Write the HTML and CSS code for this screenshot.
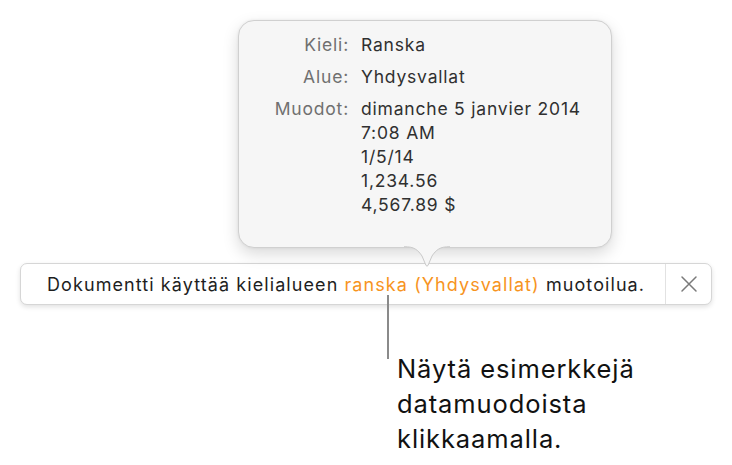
FILE: index.html
```html
<!DOCTYPE html>
<html lang="fi">
<head>
<meta charset="utf-8">
<title>Kielialue</title>
<link rel="stylesheet" href="styles.css">
</head>
<body>
<div class="stage">
  <div class="popover">
    <div class="pop-grid">
      <div class="lbl">Kieli:</div>
      <div class="val">Ranska</div>
      <div class="lbl">Alue:</div>
      <div class="val">Yhdysvallat</div>
      <div class="lbl">Muodot:</div>
      <div class="val formats">
        <span>dimanche 5 janvier 2014</span>
        <span>7:08 AM</span>
        <span>1/5/14</span>
        <span>1,234.56</span>
        <span>4,567.89 $</span>
      </div>
    </div>
    <svg class="arrow" width="46" height="22" viewBox="0 0 46 22">
      <path d="M0 0.5 C10 0.5 14 4 18 10 L22 19.5 Q23 20.8 24 19.5 L28 10 C32 4 36 0.5 46 0.5" fill="#f6f6f6" stroke="#cacaca" stroke-width="1"/>
      <rect x="0" y="-1" width="46" height="1.2" fill="#f6f6f6"/>
    </svg>
  </div>
  <div class="bar">
    <div class="msg">Dokumentti käyttää kielialueen <span class="hl">ranska (Yhdysvallat)</span> muotoilua.</div>
    <div class="close">
      <svg width="18" height="18" viewBox="0 0 18 18"><path d="M2 2 L16 16 M16 2 L2 16" stroke="#7a7a7a" stroke-width="1.5" stroke-linecap="round"/></svg>
    </div>
  </div>
  <div class="callout">
    <span class="leader"></span>
    <div class="note">Näytä esimerkkejä<br>datamuodoista<br>klikkaamalla.</div>
  </div>
</div>
</body>
</html>
```
FILE: styles.css
```css
html, body {
  margin: 0;
  padding: 0;
  background: #ffffff;
}
body {
  width: 732px;
  height: 465px;
  overflow: hidden;
  font-family: Inter, Roboto, "Liberation Sans", sans-serif;
}
.stage {
  display: flex;
  flex-direction: column;
  padding-top: 20px;
}
.popover {
  position: relative;
  margin-left: 238px;
  width: 374px;
  height: 228px;
  box-sizing: border-box;
  background: #f6f6f6;
  border: 1px solid #d0d0d0;
  border-radius: 16px;
  box-shadow: 0 6px 16px rgba(0,0,0,0.15), 0 0 3px rgba(0,0,0,0.07);
  z-index: 2;
}
.pop-grid {
  display: grid;
  grid-template-columns: 110px auto;
  column-gap: 12px;
  row-gap: 8px;
  padding-top: 12px;
  font-size: 17.5px;
  letter-spacing: 0.8px;
  line-height: 24px;
}
.lbl {
  text-align: right;
  color: #707070;
}
.val {
  color: #303030;
}
.formats {
  display: flex;
  flex-direction: column;
}
.arrow {
  position: absolute;
  left: 165px;
  bottom: -21px;
  display: block;
}
.bar {
  margin-top: 15px;
  margin-left: 20px;
  width: 692px;
  height: 42px;
  box-sizing: border-box;
  display: flex;
  align-items: stretch;
  background: #ffffff;
  border: 1px solid #d6d6d6;
  border-radius: 7px;
  box-shadow: 0 2px 5px rgba(0,0,0,0.12);
}
.msg {
  flex: 1;
  display: flex;
  align-items: center;
  padding-left: 26px;
  font-size: 18px;
  letter-spacing: 1.08px;
  color: #1e1e1e;
  white-space: pre;
}
.hl {
  color: #f7941e;
}
.close {
  width: 45px;
  border-left: 1px solid #e2e2e2;
  display: flex;
  align-items: center;
  justify-content: center;
}
.callout {
  position: relative;
  height: 160px;
}
.leader {
  position: absolute;
  left: 387px;
  top: -10px;
  width: 2px;
  height: 64px;
  background: #8a8a8a;
}
.note {
  margin-left: 397px;
  margin-top: 46px;
  font-size: 25.5px;
  letter-spacing: 0.9px;
  line-height: 35px;
  color: #111111;
}
```
